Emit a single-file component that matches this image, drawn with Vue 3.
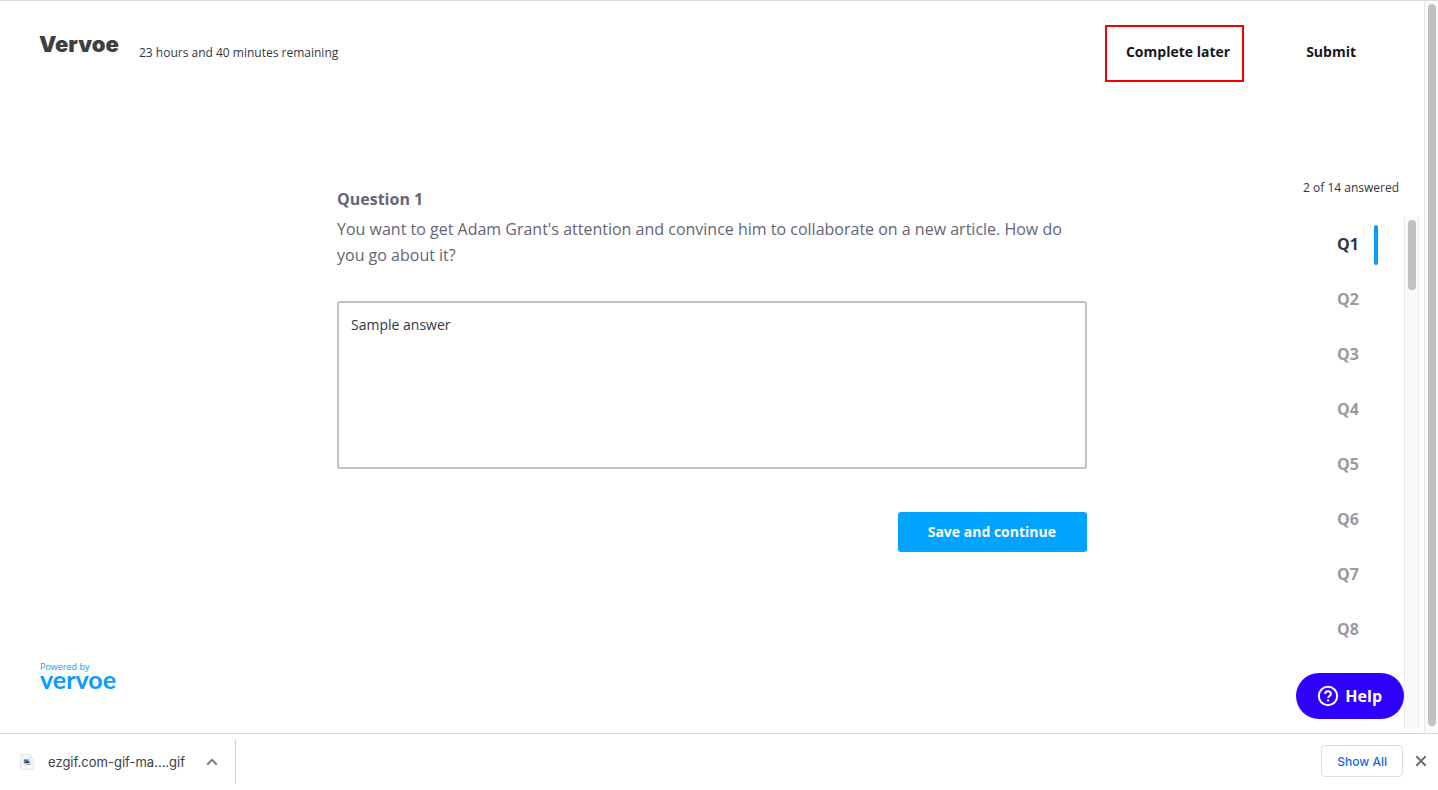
<script setup>
import { ref } from 'vue'

const answer = ref('Sample answer')
const current = ref(1)
const questions = [1, 2, 3, 4, 5, 6, 7, 8]
</script>

<template>
  <div class="window">
    <div class="viewport">
      <div class="page">
        <header class="header">
          <span class="logo">Vervoe</span>
          <span class="remaining">23 hours and 40 minutes remaining</span>
          <nav class="actions">
            <button type="button" class="action highlighted">Complete later</button>
            <button type="button" class="action">Submit</button>
          </nav>
        </header>

        <div class="columns">
          <a class="powered" href="#">
            <span class="powered-by">Powered by</span>
            <span class="powered-name">vervoe</span>
          </a>

          <main class="question">
            <h1 class="question-title">Question 1</h1>
            <label class="question-text" for="answer">You want to get Adam Grant's attention and convince him to collaborate on a new article. How do you go about it?</label>
            <textarea id="answer" v-model="answer" class="answer"></textarea>
            <button type="button" class="save">Save and continue</button>
          </main>

          <aside class="progress">
            <p class="answered">2 of 14 answered</p>
            <div class="list-area">
              <ul class="list">
                <li v-for="n in questions" :key="n">
                  <button type="button" class="item" :class="{ active: n === current }" @click="current = n">Q{{ n }}</button>
                </li>
              </ul>
              <div class="track list-track"><div class="thumb list-thumb"></div></div>
            </div>
          </aside>
        </div>

        <button type="button" class="help">
          <svg width="22" height="22" viewBox="0 0 22 22" fill="none" stroke="#fff" stroke-width="2" aria-hidden="true">
            <circle cx="11" cy="11" r="9.2" />
            <path d="M8.1 9.1c0-1.7 1.2-2.8 2.9-2.8s2.9 1.1 2.9 2.6c0 2-2.8 2.2-2.8 4.2" />
            <path d="M11.1 14.4v2" />
          </svg>
          Help
        </button>
      </div>
      <div class="track page-track"><div class="thumb page-thumb"></div></div>
    </div>

    <footer class="downloads">
      <div class="download">
        <svg class="file" width="14" height="16" viewBox="0 0 14 16" aria-hidden="true">
          <path d="M2 .7h7.5L13.3 4.5V14a1.3 1.3 0 0 1-1.3 1.3H2A1.3 1.3 0 0 1 .7 14V2A1.3 1.3 0 0 1 2 .7z" fill="#f7f7f8" stroke="#e4e4e6" />
          <path d="M9.5.7v3.8h3.8z" fill="#e2e2e5" />
          <path d="M3.5 5h6v5h-6z" fill="#b9cdf0" />
          <path d="M4 5.5h4.5v2H4z" fill="#4775ce" />
          <path d="M4.5 7.5h5v1.5h-5z" fill="#273650" />
          <path d="M6 10h5v1H6z" fill="#a9adb5" />
        </svg>
        <span class="filename">ezgif.com-gif-ma....gif</span>
        <button type="button" class="icon" aria-label="Download options">
          <svg width="12" height="8" viewBox="0 0 12 8" fill="none" stroke="#77797d" stroke-width="2" aria-hidden="true">
            <path d="M1.3 6.5 6 1.8l4.7 4.7" />
          </svg>
        </button>
      </div>
      <button type="button" class="show-all">Show All</button>
      <button type="button" class="icon close" aria-label="Close downloads">
        <svg width="12" height="12" viewBox="0 0 12 12" fill="none" stroke="#6b6e72" stroke-width="2" aria-hidden="true">
          <path d="m1.3 1.3 9.4 9.4M10.7 1.3l-9.4 9.4" />
        </svg>
      </button>
    </footer>
  </div>
</template>

<style>
body {
  margin: 0;
  background: #fff;
}
</style>

<style scoped>
.window {
  display: flex;
  flex-direction: column;
  min-height: 100vh;
  font-family: "Open Sans", "Noto Sans", sans-serif;
  color: #36363f;
}

.window *,
.window {
  box-sizing: border-box;
}

button {
  margin: 0;
  padding: 0;
  border: 0;
  background: none;
  font-family: inherit;
  color: inherit;
  cursor: pointer;
}

svg {
  display: block;
}

.viewport {
  display: flex;
  flex: 1;
  border-top: 1px solid #dadbe0;
}

.page {
  position: relative;
  display: flex;
  flex: 1;
  flex-direction: column;
}

.header {
  display: flex;
  align-items: flex-start;
  padding: 24px 48px 0 39px;
}

.logo {
  width: 100px;
  font: 900 22px/38px Inter, sans-serif;
  color: #404040;
}

.remaining {
  padding-top: 19px;
  font-size: 12px;
  line-height: 18px;
}

.actions {
  display: flex;
  gap: 42px;
  margin-left: auto;
}

.action {
  height: 57px;
  padding: 0 18px 4px;
  border: 2px solid transparent;
  font-size: 14px;
  font-weight: 700;
  line-height: 20px;
  color: #17171c;
}

.highlighted {
  padding: 0 12px 4px 19px;
  border-color: #f50000;
}

.columns {
  display: grid;
  flex: 1;
  grid-template-columns: 1fr minmax(0, 750px) 1fr;
  padding-top: 97px;
}

.powered {
  display: flex;
  flex-direction: column;
  align-self: end;
  justify-self: start;
  padding: 0 0 47px 40px;
  color: #0a9bff;
  text-decoration: none;
}

.powered-by {
  font-size: 9px;
  font-weight: 500;
  line-height: 10px;
}

.powered-name {
  font: 700 25px/14px Lato, sans-serif;
}

.question {
  display: flex;
  flex-direction: column;
  padding-top: 7px;
}

.question-title {
  margin: 0 0 4px;
  font-size: 16px;
  font-weight: 700;
  line-height: 26px;
  color: #656577;
}

.question-text {
  font-size: 16px;
  line-height: 26px;
  color: #656577;
}

.answer {
  height: 168px;
  margin: 33px 0 43px;
  padding: 12px;
  border: 2px solid #c2c2c2;
  border-radius: 3px;
  outline: 0;
  background: #fff;
  font-family: inherit;
  font-size: 14px;
  line-height: 20px;
  color: #36363f;
  resize: none;
}

.save {
  align-self: flex-end;
  height: 40px;
  padding: 0 31px 2px 30px;
  border-radius: 3px;
  background: #00a3ff;
  font-size: 14px;
  font-weight: 700;
  color: #fff;
}

.progress {
  display: flex;
  flex-direction: column;
  padding: 0 5px 4px 0;
}

.answered {
  margin: 0;
  padding: 0 20px 20px 0;
  font-size: 12px;
  line-height: 18px;
  text-align: right;
}

.list-area {
  display: flex;
  flex: 1;
  justify-content: flex-end;
}

.list {
  margin: 0;
  padding: 8px 26px 0 0;
  list-style: none;
}

.list li {
  margin-bottom: 15px;
}

.item {
  position: relative;
  display: block;
  width: 41px;
  height: 40px;
  padding-bottom: 2px;
  font-size: 16px;
  font-weight: 700;
  text-align: left;
  color: #9a9a9e;
}

.active {
  color: #36363f;
}

.active::after {
  content: "";
  position: absolute;
  inset: 0 0 0 auto;
  width: 4px;
  border-radius: 2px;
  background: #0a9bff;
}

.track {
  border: solid #e8e8e8;
  border-width: 0 1px;
  background: #fafafa;
}

.thumb {
  border-radius: 4px;
  background: #c1c1c1;
}

.list-track {
  width: 15px;
  padding: 3px 2px 0 3px;
}

.list-thumb {
  height: 70px;
}

.page-track {
  display: flex;
  width: 14px;
  padding: 3px 2px 7px 3px;
  border-right: 0;
}

.page-thumb {
  flex: 1;
}

.help {
  position: absolute;
  right: 20px;
  bottom: 14px;
  display: flex;
  align-items: center;
  gap: 6px;
  height: 46px;
  padding: 0 22px 0 21px;
  border-radius: 23px;
  background: #2f00ff;
  font-size: 16px;
  font-weight: 700;
  color: #fff;
}

.downloads {
  display: flex;
  align-items: center;
  height: 57px;
  padding-right: 11px;
  border-top: 1px solid #d8d8da;
  font-family: Inter, sans-serif;
}

.download {
  display: flex;
  align-items: center;
  width: 236px;
  height: 44px;
  padding-left: 20px;
  border-right: 1px solid #cfcfd1;
}

.filename {
  width: 158px;
  padding-left: 14px;
  font-size: 13px;
  line-height: 20px;
  color: #3c4043;
}

.icon {
  padding: 0;
}

.download .icon {
  margin-left: 14px;
}

.show-all {
  height: 32px;
  margin: 0 0 2px auto;
  padding: 0 15px;
  border: 1px solid #dadce0;
  border-radius: 4px;
  font-size: 12px;
  font-weight: 500;
  color: #1068e8;
}

.close {
  margin: 0 0 2px 12px;
}
</style>
